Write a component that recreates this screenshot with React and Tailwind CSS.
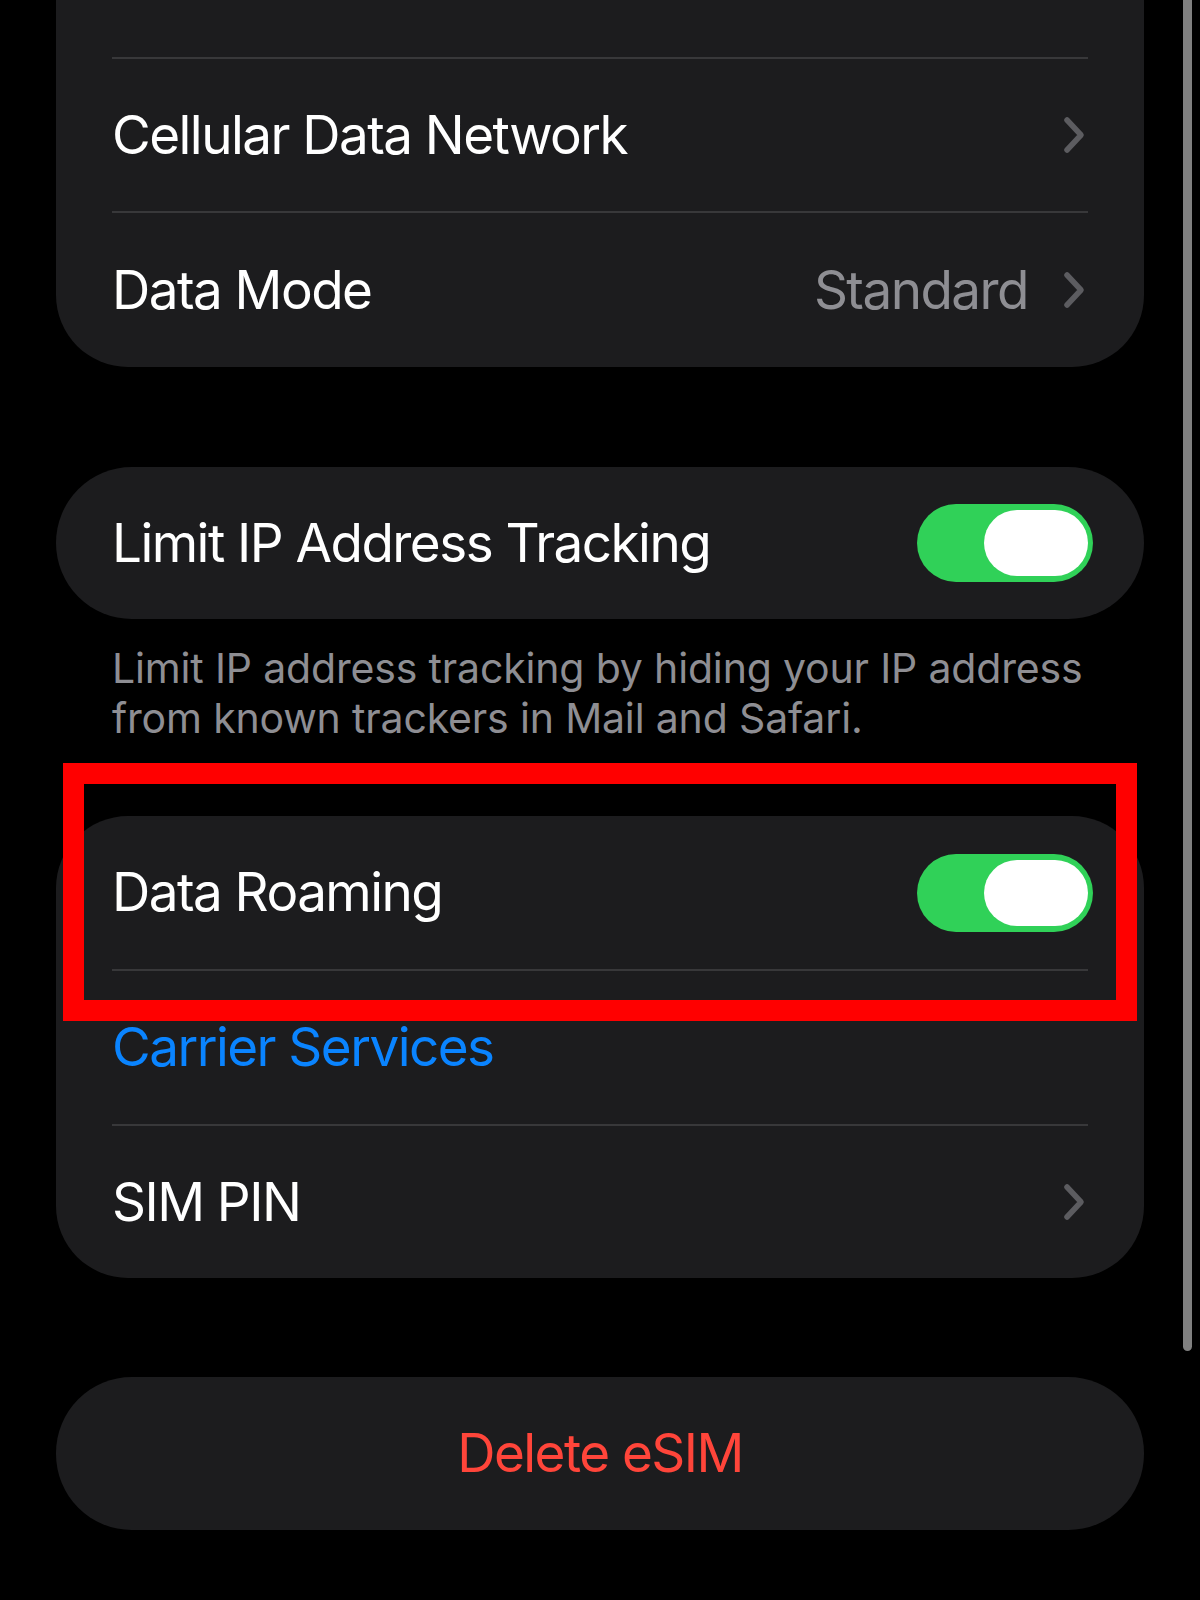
import React from 'react';

const font = { fontFamily: 'Inter, "Noto Sans", sans-serif' };

function Chevron() {
  return (
    <svg width="22" height="38" viewBox="0 0 22 38" className="shrink-0">
      <polyline
        points="4,4 18,19 4,34"
        fill="none"
        stroke="#5c5c60"
        strokeWidth="5.5"
        strokeLinecap="round"
        strokeLinejoin="round"
      />
    </svg>
  );
}

function Toggle() {
  return (
    <div className="w-[176px] h-[78px] rounded-full bg-[#30d158] flex items-center justify-end pr-[5px] shrink-0">
      <div className="w-[104px] h-[66px] rounded-full bg-white" />
    </div>
  );
}

function Separator() {
  return <div className="ml-[56px] mr-[56px] h-[2px] bg-[#38383a]" />;
}

function Row({ label, value, chevron, toggle, blue, height = 'h-[153px]' }) {
  return (
    <div className={`${height} flex items-center pl-[56px] pr-[51px]`}>
      <span className={`flex-1 text-[53px] leading-none tracking-[-0.029em] ${blue ? 'text-[#0a84ff]' : 'text-white'}`}>
        {label}
      </span>
      {value && (
        <span className="text-[53px] leading-none tracking-[-0.029em] text-[#8e8e93] mr-[35px]">{value}</span>
      )}
      {chevron && <div className="mr-[8px]"><Chevron /></div>}
      {toggle && <Toggle />}
    </div>
  );
}

export default function App() {
  return (
    <div className="relative w-[1200px] h-[1600px] bg-black overflow-hidden" style={font}>
      <div className="px-[56px]">
        {/* Cellular settings group */}
        <div className="-mt-[96px] bg-[#1c1c1e] rounded-[72px]">
          <Row label="Voice & Data" value="5G Auto" chevron />
          <Separator />
          <Row label="Cellular Data Network" chevron height="h-[152px]" />
          <Separator />
          <Row label="Data Mode" value="Standard" chevron height="h-[154px]" />
        </div>

        {/* Limit IP tracking */}
        <div className="mt-[100px] bg-[#1c1c1e] rounded-[76px]">
          <Row label="Limit IP Address Tracking" toggle height="h-[152px]" />
        </div>
        <p className="mt-[24px] pl-[56px] pr-[24px] text-[41px] leading-[50px] tracking-[-0.004em] text-[#8e8e93]">
          Limit IP address tracking by hiding your IP address from known trackers in Mail and Safari.
        </p>

        {/* Roaming group */}
        <div className="mt-[73px] bg-[#1c1c1e] rounded-[72px]">
          <Row label="Data Roaming" toggle />
          <Separator />
          <Row label="Carrier Services" blue />
          <Separator />
          <Row label="SIM PIN" chevron height="h-[152px]" />
        </div>

        {/* Delete */}
        <div className="mt-[99px] h-[153px] bg-[#1c1c1e] rounded-[76px] flex items-center justify-center">
          <span className="text-[53px] leading-none tracking-[-0.029em] text-[#ff453a]">Delete eSIM</span>
        </div>
      </div>

      {/* scroll indicator */}
      <div className="absolute left-[1183px] top-0 w-[9px] h-[1351px] rounded-b-full bg-[#808080]" />

      {/* highlight annotation */}
      <div className="absolute left-[63px] top-[763px] w-[1074px] h-[258px] border-[21px] border-[#ff0000]" />
    </div>
  );
}
